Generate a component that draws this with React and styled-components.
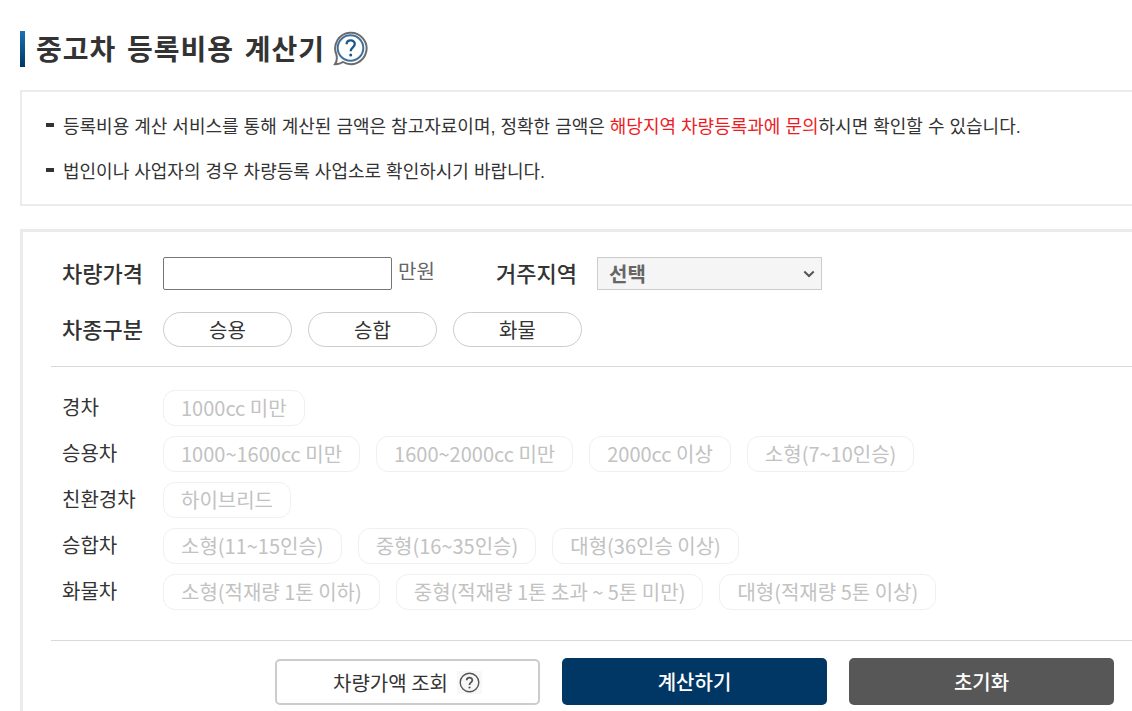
import React, { useState } from 'react'
import styled, { createGlobalStyle } from 'styled-components'

const GlobalStyle = createGlobalStyle`
* {
  box-sizing: border-box;
}
body {
  margin: 0;
  background: #fff;
  color: #333;
}
body, button, input, select {
  font-family: "Noto Sans CJK KR", "Noto Sans", sans-serif;
}
`
const Page = styled.main`
display: flex;
flex-direction: column;
min-height: 100vh;
padding: 31px 0 0 20px;
`
const TitleBar = styled.header`
display: flex;
align-items: center;
height: 36px;
`
const TitleMark = styled.span`
width: 5px;
height: 36px;
margin-right: 11px;
background: linear-gradient(#1c70b4, #003764);
`
const Title = styled.h1`
margin: 0;
padding-top: 4px;
font-family: "DejaVu Sans", "Noto Sans CJK KR", sans-serif;
font-size: 28px;
font-weight: 700;
line-height: 32px;
letter-spacing: 1px;
`
const HelpButton = styled.button`
display: flex;
margin-left: 8px;
padding: 0;
border: 0;
background: none;
cursor: pointer;
`
const Notice = styled.ul`
margin: 23px 0;
padding: 10px 24px 12px;
border: 2px solid #ebebeb;
border-right: 0;
list-style: none;
`
const NoticeItem = styled.li`
display: flex;
align-items: center;
gap: 9px;

&::before {
  content: "";
  width: 8px;
  height: 4px;
  background: #333;
}
`
const NoticeText = styled.p`
margin: 0;
padding-top: 6px;
font-family: "Liberation Sans", "Noto Sans CJK KR", sans-serif;
font-size: 18px;
line-height: 39px;
`
const Red = styled.span`
color: #ed1c24;
`
const Panel = styled.form`
flex: 1;
padding: 25px 0 6px 28px;
border: 3px solid #ebebeb;
border-right: 0;
border-bottom: 0;
`
const Section = styled.div`
display: flex;
flex-direction: column;
gap: ${(p) => p.$gap};
padding: ${(p) => p.$padding};
border-bottom: 1px solid #d9d9d9;
`
const Row = styled.div`
display: flex;
align-items: center;
`
const FieldLabel = styled.label`
width: 101px;
padding-bottom: 2px;
font-size: 22px;
font-weight: 500;
line-height: 31px;
`
const PriceInput = styled.input`
width: 229px;
height: 33px;
padding: 0 8px;
border: 1px solid #767676;
border-radius: 2px;
font-size: 20px;
`
const Unit = styled.span`
width: 98px;
margin-left: 6px;
color: #666;
font-size: 20px;
line-height: 28px;
align-self: flex-start;
`
const SelectBox = styled.div`
display: grid;
align-items: center;

> * {
  grid-area: 1 / 1;
}
> svg {
  justify-self: end;
  margin-right: 7px;
  pointer-events: none;
}
`
const RegionSelect = styled.select`
appearance: none;
width: 225px;
height: 33px;
padding: 0 24px 0 11px;
border: 1px solid #ccc;
border-radius: 0;
background: #f5f5f5;
color: #666;
font-size: 20px;
font-weight: 700;
`
const Choices = styled.div`
display: flex;
flex-wrap: wrap;
gap: 10px 16px;
`
const KindButton = styled.button`
width: 129px;
height: 35px;
padding: 0;
border: 1px solid ${(p) => (p.$on ? '#003764' : '#ccc')};
border-radius: 18px;
background: #fff;
color: #333;
font-size: 20px;
line-height: 33px;
cursor: pointer;
`
const GroupName = styled.span`
flex: none;
width: 101px;
font-size: 20px;
line-height: 34px;
align-self: flex-start;
`
const Chip = styled.button`
height: 36px;
padding: 0 17px;
border: 1px solid #f0f0f0;
border-radius: 12px;
background: #fff;
color: #c2c2c2;
font-size: 20px;
line-height: 34px;
`
const Actions = styled.div`
display: flex;
align-items: flex-end;
justify-content: flex-end;
gap: 22px;
padding: 17px 18px 0 0;
`
const Action = styled.button`
display: flex;
align-items: center;
justify-content: center;
gap: 9px;
width: 265px;
height: ${(p) => (p.$bg ? '47px' : '46px')};
padding: 0;
border: ${(p) => (p.$bg ? '0' : '2px solid #ccc')};
border-radius: 5px;
background: ${(p) => p.$bg || '#fff'};
color: ${(p) => (p.$bg ? '#fff' : '#333')};
font-size: 20px;
font-weight: ${(p) => (p.$bg ? 500 : 400)};
cursor: pointer;
`
const IconBack = styled.span`
display: flex;
padding: 1px 2px;
background: #f8f8f8;
`

const kinds = ['승용', '승합', '화물']
const groups = [
    { name: '경차', items: ['1000cc 미만'] },
    { name: '승용차', items: ['1000~1600cc 미만', '1600~2000cc 미만', '2000cc 이상', '소형(7~10인승)'] },
    { name: '친환경차', items: ['하이브리드'] },
    { name: '승합차', items: ['소형(11~15인승)', '중형(16~35인승)', '대형(36인승 이상)'] },
    { name: '화물차', items: ['소형(적재량 1톤 이하)', '중형(적재량 1톤 초과 ~ 5톤 미만)', '대형(적재량 5톤 이상)'] },
]

const BubbleIcon = () => (
    <svg width="35" height="36" viewBox="0 0 35 36" fill="none">
        <path d="M3.4 23.5A15.7 15.7 0 1 1 10 31C7.5 32.7 4.8 33.4 2 33.2C3.6 31 4.2 27 3.4 23.5Z" stroke="#6b6b6b" strokeWidth="2" />
        <circle cx="17.5" cy="17" r="12.8" stroke="#3f709d" strokeWidth="2" />
        <path d="M13.6 13.3C13.6 8.1 21.8 8.1 21.8 13.1C21.8 16.3 17.7 16.5 17.7 20.3" stroke="#1c568b" strokeWidth="2.3" />
        <circle cx="17.7" cy="24.1" r="1.5" fill="#1c568b" />
    </svg>
)

const QuestionIcon = () => (
    <svg width="21" height="21" viewBox="0 0 21 21" fill="none">
        <circle cx="10.5" cy="10.5" r="9.3" stroke="#555" strokeWidth="1.4" />
        <path d="M7.7 8.3C7.7 4.7 13.3 4.7 13.3 8.2C13.3 10.4 10.5 10.4 10.5 13" stroke="#555" strokeWidth="1.8" />
        <circle cx="10.5" cy="15.5" r="1.1" fill="#555" />
    </svg>
)

const ArrowIcon = () => (
    <svg width="12" height="8" viewBox="0 0 12 8" fill="none">
        <path d="M1.3 1.5L6 6L10.7 1.5" stroke="#555" strokeWidth="2" />
    </svg>
)

export default function App() {

    const [kind, setKind] = useState('')

    return (
        <Page>
            <GlobalStyle />
            <TitleBar>
                <TitleMark />
                <Title>중고차 등록비용 계산기</Title>
                <HelpButton type="button" aria-label="도움말"><BubbleIcon /></HelpButton>
            </TitleBar>
            <Notice>
                <NoticeItem>
                    <NoticeText>
                        등록비용 계산 서비스를 통해 계산된 금액은 참고자료이며, 정확한 금액은 <Red>해당지역 차량등록과에 문의</Red>하시면 확인할 수 있습니다.
                    </NoticeText>
                </NoticeItem>
                <NoticeItem>
                    <NoticeText>법인이나 사업자의 경우 차량등록 사업소로 확인하시기 바랍니다.</NoticeText>
                </NoticeItem>
            </Notice>
            <Panel onSubmit={(e) => e.preventDefault()} onReset={() => setKind('')}>
                <Section $gap="22px" $padding="0 0 19px 11px">
                    <Row>
                        <FieldLabel htmlFor="price">차량가격</FieldLabel>
                        <PriceInput id="price" type="text" inputMode="numeric" />
                        <Unit>만원</Unit>
                        <FieldLabel htmlFor="region">거주지역</FieldLabel>
                        <SelectBox>
                            <RegionSelect id="region">
                                <option>선택</option>
                            </RegionSelect>
                            <ArrowIcon />
                        </SelectBox>
                    </Row>
                    <Row>
                        <FieldLabel as="span" id="kind">차종구분</FieldLabel>
                        <Choices role="group" aria-labelledby="kind">
                            {
                                kinds.map((k) => (
                                    <KindButton key={k} type="button" $on={k === kind} onClick={() => setKind(k)}>{k}</KindButton>
                                ))
                            }
                        </Choices>
                    </Row>
                </Section>
                <Section $gap="10px" $padding="23px 0 30px 11px">
                    {
                        groups.map((g) => (
                            <Row key={g.name}>
                                <GroupName>{g.name}</GroupName>
                                <Choices>
                                    {g.items.map((item) => <Chip key={item} type="button" disabled>{item}</Chip>)}
                                </Choices>
                            </Row>
                        ))
                    }
                </Section>
                <Actions>
                    <Action type="button">
                        차량가액 조회
                        <IconBack><QuestionIcon /></IconBack>
                    </Action>
                    <Action type="submit" $bg="#003764">계산하기</Action>
                    <Action type="reset" $bg="#575757">초기화</Action>
                </Actions>
            </Panel>
        </Page>
    )
}
